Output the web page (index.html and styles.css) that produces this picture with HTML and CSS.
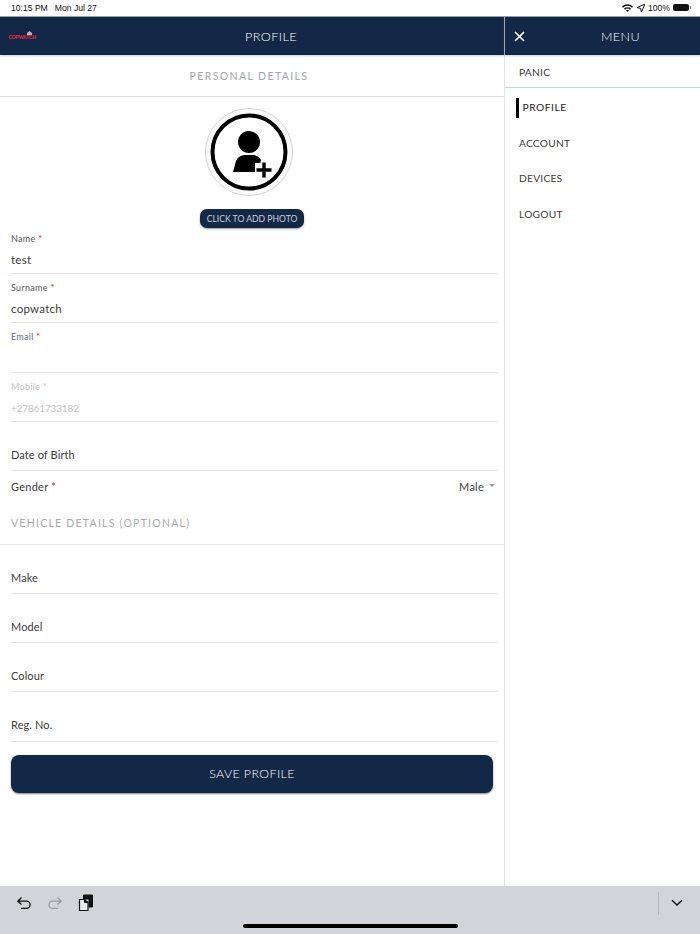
FILE: index.html
```html
<!DOCTYPE html>
<html lang="en">
<head>
<meta charset="utf-8">
<title>Profile</title>
<link rel="stylesheet" href="styles.css">
</head>
<body>
<div class="app">
  <div class="status">
    <div class="status-time"><span>10:15 PM</span><span>Mon Jul 27</span></div>
    <div class="status-right">
      <svg class="ic-wifi" width="11" height="8" viewBox="0 0 11 8"><path d="M0 2.6A7.8 7.8 0 0 1 11 2.6L10 3.7A6.3 6.3 0 0 0 1 3.7Z M2 4.6A5 5 0 0 1 9 4.6L8 5.7A3.5 3.5 0 0 0 3 5.7Z M3.9 6.5A2.2 2.2 0 0 1 7.1 6.5L5.5 8Z" fill="#111"/></svg>
      <svg class="ic-loc" width="8" height="8" viewBox="0 0 8 8"><path d="M8 0L0 3.6L3.6 4.4L4.4 8Z" fill="none" stroke="#111" stroke-width="1"/></svg>
      <span>100%</span>
      <span class="battery"><span class="battery-fill"></span></span>
    </div>
  </div>
  <div class="main">
    <section class="left">
      <header class="bar left-bar">
        <div class="logo"><svg class="logo-roof" width="5" height="4" viewBox="0 0 5 4"><path d="M2.5 0L5 2V4H0V2Z" fill="#b9b4c4"/></svg><span class="logo-text">COPWATCH</span></div>
        <h1 class="bar-title">PROFILE</h1>
      </header>
      <h2 class="section-head personal">PERSONAL DETAILS</h2>
      <div class="avatar-block">
        <div class="avatar-outer">
          <svg width="78" height="78" viewBox="0 0 78 78">
            <circle cx="39" cy="39" r="36.5" fill="#fff" stroke="#000" stroke-width="4"/>
            <circle cx="39" cy="29" r="11" fill="#000"/>
            <path d="M23 59L26 48Q28 43 34 42H44Q49 43 51 47V50H45V59Z" fill="#000"/>
            <path d="M54 48V66M45 57H63" stroke="#fff" stroke-width="7" fill="none"/>
            <path d="M54 49.5V64.5M46.5 57H61.5" stroke="#000" stroke-width="3.4" fill="none"/>
          </svg>
        </div>
        <button class="photo-btn">CLICK TO ADD PHOTO</button>
      </div>
      <div class="field"><label class="lbl">Name <i>*</i></label><div class="val">test</div></div>
      <div class="field"><label class="lbl">Surname <i>*</i></label><div class="val">copwatch</div></div>
      <div class="field"><label class="lbl lbl-blue">Email <i>*</i></label><div class="val">&nbsp;</div></div>
      <div class="field disabled"><label class="lbl">Mobile <i>*</i></label><div class="val">+27861733182</div></div>
      <div class="field plain"><div class="val">Date of Birth</div></div>
      <div class="gender">
        <span>Gender <i>*</i></span>
        <span class="gender-val">Male<span class="caret"></span></span>
      </div>
      <h2 class="section-head vehicle">VEHICLE DETAILS (OPTIONAL)</h2>
      <div class="vehicle-fields">
        <div class="field plain"><div class="val">Make</div></div>
        <div class="field plain"><div class="val">Model</div></div>
        <div class="field plain"><div class="val">Colour</div></div>
        <div class="field plain"><div class="val">Reg. No.</div></div>
      </div>
      <button class="save-btn">SAVE PROFILE</button>
    </section>
    <aside class="right">
      <header class="bar right-bar">
        <svg class="close" width="11" height="11" viewBox="0 0 11 11"><path d="M1 1L10 10M10 1L1 10" stroke="#fff" stroke-width="1.7" fill="none"/></svg>
        <h2 class="bar-title menu-title">MENU</h2>
      </header>
      <nav class="menu">
        <a class="menu-item panic">PANIC</a>
        <a class="menu-item active">PROFILE</a>
        <a class="menu-item">ACCOUNT</a>
        <a class="menu-item">DEVICES</a>
        <a class="menu-item">LOGOUT</a>
      </nav>
    </aside>
  </div>
  <footer class="toolbar">
    <div class="tools">
      <svg width="16" height="16" viewBox="0 0 16 16"><path d="M5.5 2.5L1.8 6.2L5.5 9.5M2 6.2H10.5A3.6 3.6 0 0 1 10.5 13.4H5" fill="none" stroke="#111" stroke-width="1.3"/></svg>
      <svg width="16" height="16" viewBox="0 0 16 16"><path d="M10.5 2.5L14.2 6.2L10.5 9.5M14 6.2H5.5A3.6 3.6 0 0 0 5.5 13.4H11" fill="none" stroke="#9a9da1" stroke-width="1.3"/></svg>
      <svg width="16" height="18" viewBox="0 0 16 18"><path d="M5.5 1H14.5V13H11V5H5.5Z" fill="#111" stroke="#111" stroke-width="1"/><path d="M1.5 5.5H6.5L10 8.5V16.5H1.5Z" fill="#e8e9ec" stroke="#111" stroke-width="1.2"/><path d="M6.5 5.5V8.5H10" fill="#111" stroke="#111"/></svg>
    </div>
    <div class="tools-right">
      <span class="divider"></span>
      <svg width="12" height="8" viewBox="0 0 12 8"><path d="M1 1.2L6 6L11 1.2" fill="none" stroke="#111" stroke-width="1.4"/></svg>
    </div>
    <span class="home"></span>
  </footer>
</div>
</body>
</html>
```
FILE: styles.css
```css
* { box-sizing: border-box; }
html, body { margin: 0; padding: 0; }
body { font-family: "Lato", "Liberation Sans", sans-serif; background: #fff; color: #333; }
.app { width: 700px; height: 934px; display: flex; flex-direction: column; overflow: hidden; }
.status { height: 17px; flex: none; display: flex; justify-content: space-between; align-items: center; padding: 0 11px 1px 11px; font-family: "Liberation Sans", sans-serif; font-size: 8.6px; color: #111; border-bottom: 1px solid #9aa0a8; }
.status-time { display: flex; gap: 7px; }
.status-right { display: flex; align-items: center; gap: 2px; }
.ic-loc { margin: 0 1px 0 2px; }
.battery { display: inline-block; width: 16px; height: 7px; background: #111; border-radius: 2px; margin-left: 1px; position: relative; }
.battery-fill { position: absolute; right: -2px; top: 2px; width: 1px; height: 3px; background: #777; }
.main { flex: 1; display: flex; min-height: 0; }
.left { width: 505px; flex: none; border-right: 1px solid #e4e5e7; display: flex; flex-direction: column; }
.right { flex: 1; display: flex; flex-direction: column; }
.bar { height: 38px; flex: none; background: #132846; display: flex; align-items: center; box-shadow: 0 1px 2px rgba(130,140,160,.45); position: relative; }
.left-bar { justify-content: center; padding-left: 38px; border-right: 1px solid #a6adb8; margin-right: -1px; }
.bar-title { margin: 0; font-size: 12.6px; font-weight: 300; color: #fff; letter-spacing: .45px; }
.logo { position: absolute; left: 10px; top: 14px; width: 26px; height: 10px; display: flex; flex-direction: column; align-items: flex-end; }
.logo-roof { margin-right: 4px; margin-bottom: -1px; }
.logo-text { font-family: "Liberation Sans", sans-serif; font-size: 5px; line-height: 6px; font-weight: 700; color: #e02c44; letter-spacing: -.15px; white-space: nowrap; }
.right-bar { padding-left: 9px; }
.menu-title { flex: 1; text-align: center; padding-left: 16px; }
.section-head { margin: 0; font-weight: 400; letter-spacing: 1.4px; color: #a3a6ad; font-size: 10.5px; }
.personal { height: 42px; flex: none; display: flex; align-items: center; justify-content: center; padding-top: 1px; padding-right: 6px; border-bottom: 1px solid #d8d9db; }
.avatar-block { display: flex; flex-direction: column; align-items: center; height: 127.7px; flex: none; padding-top: 11px; }
.avatar-outer { width: 88px; height: 88px; flex: none; border-radius: 50%; border: 1px solid #d4d4d4; display: flex; align-items: center; justify-content: center; margin-left: -6px; background: #fbfbfb; }
.photo-btn { margin: 13px 0 -3.3px; width: 104px; height: 19px; flex: none; padding: 0; border: 0; border-radius: 7px; background: #132846; color: #c9ced6; font-family: inherit; font-size: 8.6px; box-shadow: 0 1px 2px rgba(0,0,0,.4); white-space: nowrap; }
.field { height: 49.3px; flex: none; margin: 0 6px 0 11px; border-bottom: 1.5px solid #e6e6e6; position: relative; }
.lbl { display: block; font-size: 9px; line-height: 11px; color: #555; padding-top: 8px; height: 19px; letter-spacing: .3px; }
.lbl i, .gender i { color: #e01020; font-style: normal; }
.lbl-blue { color: #5a6c88; }
.val { font-size: 11.5px; line-height: 14px; color: #3c3c3c; padding-top: 9px; letter-spacing: .25px; }
.disabled .lbl, .disabled .val { color: #c4c4c4; }
.disabled .val { font-size: 10px; letter-spacing: -.15px; }
.disabled .lbl i { color: #f3b0b4; }
.plain .val { padding-top: 26px; font-size: 11px; letter-spacing: .1px; }
.gender { height: 30px; flex: none; margin: 0 9px 0 11px; display: flex; justify-content: space-between; align-items: center; font-size: 11px; color: #3c3c3c; padding-top: 1px; letter-spacing: .25px; }
.gender-val { display: flex; align-items: center; gap: 5px; }
.caret { width: 0; height: 0; border-left: 3.5px solid transparent; border-right: 3.5px solid transparent; border-top: 3.5px solid #999; margin-bottom: 2px; }
.vehicle { height: 43.7px; flex: none; padding: 15px 0 0 11px; border-bottom: 1px solid #e6e6e6; line-height: 14px; color: #a9abb0; letter-spacing: 1.25px; }
.vehicle-fields { display: flex; flex-direction: column; }
.vehicle-fields .field { height: 49.2px; }
.save-btn { margin: 13px 0 0 11px; width: 482px; height: 38px; flex: none; border: 0; border-radius: 8px; background: #132846; color: #fff; font-family: inherit; font-size: 12.4px; font-weight: 300; letter-spacing: .4px; box-shadow: 0 1px 2px rgba(0,0,0,.5); }
.menu { display: flex; flex-direction: column; }
.menu-item { height: 35.5px; flex: none; display: flex; align-items: center; padding-left: 14px; font-size: 10.2px; color: #3a3a3a; letter-spacing: .25px; }
.menu-item.panic { height: 32.5px; padding-top: 2px; border-bottom: 1px solid #bcd8f2; }
.menu-item.active { margin-top: 2px; padding-left: 17.5px; color: #222; letter-spacing: .55px; position: relative; }
.menu-item.active::before { content: ""; position: absolute; left: 11px; top: 8px; width: 3px; height: 20px; background: #000; }
.toolbar { height: 48px; flex: none; background: #d1d4d9; display: flex; justify-content: space-between; position: relative; }
.tools { display: flex; gap: 15px; padding: 9px 0 0 16px; align-items: flex-start; }
.tools svg:last-child { margin-top: -1px; }
.tools-right { display: flex; align-items: flex-start; padding-right: 17px; gap: 12px; }
.tools-right svg { margin-top: 13px; }
.divider { width: 1px; height: 23px; background: #b4b7bc; margin-top: 6px; }
.home { position: absolute; left: 243px; top: 38px; width: 215px; height: 4px; border-radius: 2px; background: #000; }
```
